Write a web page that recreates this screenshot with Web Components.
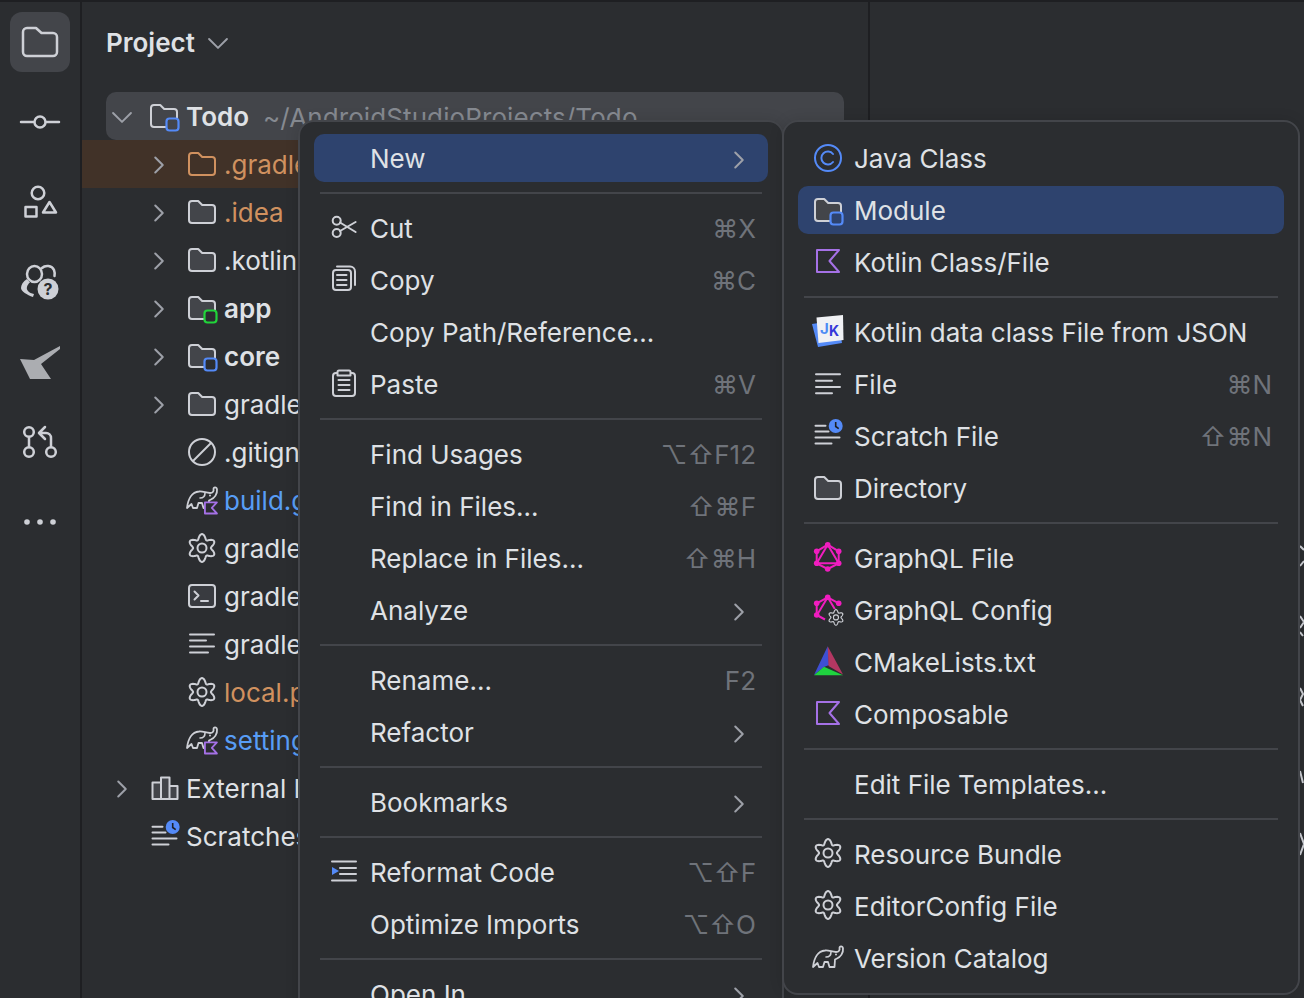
<!DOCTYPE html>
<html><head><meta charset="utf-8"><style>
html,body{margin:0;padding:0;background:#2b2d30;height:100%;overflow:hidden}
</style></head><body>
<x-app></x-app>
<script>
const S='#ced0d6',G='#9da0a8',B='#548af7',P='#a571e6',O='#d0915f';
const dim=`stroke="${S}" stroke-width="2" fill="none" stroke-linecap="round" stroke-linejoin="round"`;
const big=`stroke="${S}" stroke-width="2.5" fill="none" stroke-linecap="round" stroke-linejoin="round"`;
const folderPath='M3 8a3 3 0 0 1 3-3h6.2l4 4H26a3 3 0 0 1 3 3v12a3 3 0 0 1-3 3H6a3 3 0 0 1-3-3z';
let gp='';
for(let i=0;i<=120;i++){const t=i/120*Math.PI*2,r=11.4-2.5*Math.cos(6*t);gp+=(i?'L':'M')+(16+r*Math.cos(t)).toFixed(2)+' '+(15+r*Math.sin(t)).toFixed(2);}
const gear=`<path ${dim} d="${gp}z"/><circle cx="16" cy="15" r="4.5" ${dim}/>`;
const elephant=`<path stroke="${S}" stroke-width="1.8" fill="none" stroke-linecap="round" stroke-linejoin="round" d="M1 25C2 16 6 9 13 8.500C17 8 20 10 24 10C27 10 28 8 27.500 6C27.500 4 30.500 3.500 31 6.500C31.500 11 28.500 15 25 16.500L23 17.500L22.500 25H17.500L16 20H12.500L11 25H7L5.500 21L1 25z"/><path stroke="${S}" stroke-width="1.6" fill="none" stroke-linecap="round" d="M19 10c0 3-2 5-5 5"/><circle cx="24" cy="12.500" r="1" fill="${S}"/>`;
const kotlin=`<path d="M5 4h22l-9.500 11 9.500 11H5z" fill="none" stroke="${P}" stroke-width="2" stroke-linejoin="round"/>`;
const kotlinMini=`<path d="M2 2h26l-11 12 11 12H2z" style="fill:var(--badge,#2b2d30)" stroke="${P}" stroke-width="4" stroke-linejoin="round"/>`;
const modBadge=c=>`<rect x="18.500" y="18.500" width="12" height="12" rx="3" style="fill:var(--badge,#2b2d30)" stroke="${c}" stroke-width="2.2"/>`;
const scratchI=`<path ${dim} d="M3.500 5.700h10M3.500 11.500h13M3.500 17.500h24M3.500 23.500h16"/><circle cx="23.700" cy="6" r="7" fill="${B}"/><path d="M23.700 2v4.500l3 2.200" stroke="#1e1f22" stroke-width="1.600" fill="none"/>`;
const g1='#f01dbf';
const ICONS={
 folderBig:`<path ${big} d="M5 12a4 4 0 0 1 4-4h9l5.500 5H35a4 4 0 0 1 4 4v15a4 4 0 0 1-4 4H9a4 4 0 0 1-4-4z"/>`,
 commit:`<circle cx="22" cy="22" r="5.500" ${big}/><path ${big} d="M3 22h13M28 22h13"/>`,
 structure:`<circle cx="20" cy="13" r="6.300" ${big}/><rect x="7.500" y="27" width="11" height="9.500" ${big}/><path ${big} d="M31.500 22L38 32.500H25z"/>`,
 help:`<path ${big} d="M24 14a7.500 8 0 1 1-15 0 7.500 8 0 0 1 15 0z"/><path ${big} d="M24 8c3-3 10-3 12 2 .8 2 .8 4 .5 6"/><path fill="${S}" d="M9 19c-4 2.500-6 6-6 9 0 3 6 7 12 9l1-3c-5-1-8-4-7-7 .5-2 1.500-3.500 3-4.500z"/><circle cx="30" cy="29" r="10.500" fill="${S}"/><text x="30" y="35" font-family="Inter" font-weight="700" font-size="16" fill="#2b2d30" text-anchor="middle">?</text>`,
 android:`<path fill="#b9bbc0" d="M0 15L14 16L40 2V5L21 20L31 35H10Z" opacity=".9" style="filter:blur(.6px)"/>`,
 pr:`<circle cx="11" cy="12" r="4.800" ${big}/><circle cx="11" cy="32" r="4.800" ${big}/><circle cx="33" cy="32" r="4.800" ${big}/><path ${big} d="M11 17v10M33 27v-9a5 5 0 0 0-5-5h-6M27 7l-6 6 6 6"/>`,
 more:`<circle cx="9" cy="22" r="2.800" fill="${S}"/><circle cx="22" cy="22" r="2.800" fill="${S}"/><circle cx="35" cy="22" r="2.800" fill="${S}"/>`,
 down:`<path d="M5 11l11 11 11-11" fill="none" stroke="${G}" stroke-width="2.400" stroke-linecap="round" stroke-linejoin="round"/>`,
 right:`<path d="M11 6l10 10-10 10" fill="none" stroke="${G}" stroke-width="2.700" stroke-linecap="round" stroke-linejoin="round"/>`,
 folder:`<path d="${folderPath}" fill="#43454a" stroke="${S}" stroke-width="2" stroke-linejoin="round"/>`,
 folderO:`<path d="${folderPath}" fill="none" stroke="${O}" stroke-width="2" stroke-linejoin="round"/>`,
 moduleB:`<path d="${folderPath}" fill="none" stroke="${S}" stroke-width="2" stroke-linejoin="round"/>${modBadge(B)}`,
 moduleF:`<path d="${folderPath}" fill="#43454a" stroke="${S}" stroke-width="2" stroke-linejoin="round"/>${modBadge(B)}`,
 moduleG:`<path d="${folderPath}" fill="#43454a" stroke="${S}" stroke-width="2" stroke-linejoin="round"/>${modBadge('#21d33a')}`,
 ignore:`<circle cx="16" cy="16" r="13" ${dim}/><path ${dim} d="M7 25L25 7"/>`,
 gradleK:`<g transform="translate(0 -1)">${elephant}</g><g transform="translate(18 17.500) scale(.46)">${kotlinMini}</g>`,
 gear,
 term:`<rect x="3" y="5" width="26" height="22" rx="3" fill="#393b40" stroke="${S}" stroke-width="2"/><path ${dim} d="M8.500 11.500l4 4-4 4M15 21h7"/>`,
 lines:`<path ${dim} d="M4 6.500h24M4 12.500h16M4 18.500h24M4 24.500h18"/>`,
 lib:`<path d="M3.500 9h8.500v16.500H3.500zM12 4h8.500v21.500H12zM20.500 12.500h8v13h-8z" fill="#43454a" stroke="${S}" stroke-width="2" stroke-linejoin="round"/>`,
 scratch:scratchI,
 cut:`<circle cx="8.700" cy="8.700" r="4" ${dim}/><circle cx="8.700" cy="21" r="4" ${dim}/><path ${dim} d="M12 10.500L27.600 20M12 19L27.600 10"/>`,
 copy:`<rect x="5" y="6" width="18" height="20" rx="3" ${dim}/><path ${dim} d="M9 2.500h13a5 5 0 0 1 5 5V21M9 11h9.500M9 16h9.500M9 21h9.500"/>`,
 paste:`<rect x="5" y="5" width="22" height="23" rx="3" ${dim}/><path d="M11 2.500h10a1.500 1.500 0 0 1 1.500 1.500v3.500h-13V4A1.500 1.500 0 0 1 11 2.500z" fill="#2b2d30" stroke="${S}" stroke-width="2" stroke-linejoin="round"/><path ${dim} d="M10.500 12h11M10.500 17h11M10.500 22h11"/>`,
 reformat:`<path ${dim} d="M4 5.500h24M12 12h16M12 18h16M4 24.500h24"/><path d="M4 11l7 4-7 4z" fill="${B}"/>`,
 java:`<circle cx="16" cy="16" r="13" fill="none" stroke="${B}" stroke-width="2"/><path d="M21 12a6.500 6.500 0 1 0 0 8" fill="none" stroke="${B}" stroke-width="2" stroke-linecap="round"/>`,
 kotlin,
 jk:`<path d="M0 8L26 4L30 27L6 31z" fill="${B}"/><path d="M4.500 1.500L31 -1L31.500 24L6.500 27z" fill="#f0f1f4"/><text x="8" y="18" font-family="Inter" font-weight="700" font-size="15" fill="#4d8cf5">J</text><text x="17" y="20" font-family="Inter" font-weight="700" font-size="14" fill="#3538d9">K</text>`,
 file:`<path ${dim} d="M4 6.300h24M4 12.700h16M4 19h24M4 25.300h16"/>`,
 dir:`<path d="${folderPath}" fill="#43454a" stroke="${S}" stroke-width="2" stroke-linejoin="round"/>`,
 graph:`<g stroke="${g1}" stroke-width="2" fill="none" stroke-linejoin="round"><path d="M15.700 2.700L26.700 9.300V21.300L15.700 27L4.700 21.300V9.300Z"/><path d="M15.700 2.700L26.700 21.300H4.700Z"/></g><g fill="${g1}"><circle cx="15.700" cy="2.700" r="2.800"/><circle cx="26.700" cy="9.300" r="2.800"/><circle cx="26.700" cy="21.300" r="2.800"/><circle cx="15.700" cy="27" r="2.800"/><circle cx="4.700" cy="21.300" r="2.800"/><circle cx="4.700" cy="9.300" r="2.800"/></g>`,
 graphCfg:`<g stroke="${g1}" stroke-width="2" fill="none" stroke-linejoin="round"><path d="M4.700 9.300L15.700 3.300L26.700 9.300M4.700 9.300V21L13 25.500M15.700 3.300L5 21M15.700 3.300L24 17"/></g><g fill="${g1}"><circle cx="15.700" cy="3.300" r="2.800"/><circle cx="26.700" cy="9.300" r="2.800"/><circle cx="4.700" cy="21" r="2.800"/><circle cx="4.700" cy="9.300" r="2.800"/></g><circle cx="24" cy="23.300" r="8.500" fill="#2b2d30"/><g transform="translate(15 15) scale(.56)">${gear}</g>`,
 cmake:`<path d="M15.700 .3L2 29L12 21L17 19z" fill="#3e4fd3"/><path d="M15.700 .3L31 28.500L16.500 20z" fill="#b33762"/><path d="M2 29.300L12 20.700L31 29.300z" fill="#1fd33f"/>`,
 gradle:elephant
};
const BIG=new Set(['folderBig','commit','structure','help','pr','more']);
class XIcon extends HTMLElement{
  connectedCallback(){
    const n=this.getAttribute('name');let s=+this.getAttribute('size')||32,vb='0 0 32 32',w=s,h=s;
    if(BIG.has(n)){w=h=44;vb='0 0 44 44';}
    if(n==='android'){w=40;h=36;vb='0 0 40 36';}
    const dy=this.getAttribute('dy')||0;
    this.shadowRoot||this.attachShadow({mode:'open'});
    this.shadowRoot.innerHTML=`<style>:host{display:inline-flex;flex:none;width:${w}px;height:${h}px}svg{display:block;overflow:visible}</style><svg width="${w}" height="${h}" viewBox="${vb}"><g transform="translate(0 ${dy})">${ICONS[n]||''}</g></svg>`;
  }
}
customElements.define('x-icon',XIcon);

class XStripe extends HTMLElement{
  constructor(){super();const r=this.attachShadow({mode:'open'});
    const names=['folderBig','commit','structure','help','android','pr','more'];
    r.innerHTML=`<style>
    :host{display:flex;flex-direction:column;align-items:center;flex:none;box-sizing:border-box;padding-top:10px;gap:20px;border-right:2px solid #1e1f22;width:82px}
    div{width:60px;height:60px;border-radius:12px;display:flex;align-items:center;justify-content:center}
    div.a{background:#43454a}
    </style>`+names.map((n,i)=>`<div class="${i?'':'a'}"><x-icon name="${n}"></x-icon></div>`).join('');
  }
}
customElements.define('x-stripe',XStripe);

const ROW_DY={gear:1,scratch:1,lib:1.5};
class XRow extends HTMLElement{
  constructor(){super();this.attachShadow({mode:'open'});}
  connectedCallback(){
    const a=n=>this.getAttribute(n);
    const ar=a('arrow'),ic=a('icon');
    this.shadowRoot.innerHTML=`<style>
    :host{display:flex;align-items:center;height:48px;box-sizing:border-box;padding-left:${a('indent')||0}px;padding-right:570px;color:${a('color')||'#dfe1e5'};font-weight:${a('bold')!=null?600:400};white-space:nowrap;overflow:hidden}
    :host([hl]){background:#413228}
    :host([sel]){background:#43454a;border-radius:10px;margin:0 24px;padding:0;--badge:#43454a}
    .c{width:32px;flex:none;display:flex;justify-content:center;margin:2px 11px 0 0}
    :host([sel]) .c{margin-right:10px}
    .i{margin-right:6px}
    :host([top]) .i{margin-right:5px}
    .t{min-width:0;overflow:hidden;line-height:48px;margin-top:2px}
    :host([sel]) .t{overflow:visible;flex:none}
    .h{color:#868a91;font-weight:400;margin:2px 0 0 14px;letter-spacing:.1px;flex:none}
    </style><span class="c">${ar?`<x-icon name="${ar}" size="${ar==='down'?26:24}"></x-icon>`:''}</span><x-icon class="i" name="${ic}" dy="${ROW_DY[ic]||0}"></x-icon><span class="t"><slot></slot></span>${a('hint')?`<span class="h">${a('hint')}</span>`:''}`;
  }
}
customElements.define('x-row',XRow);

class XItem extends HTMLElement{
  constructor(){super();this.attachShadow({mode:'open'});}
  connectedCallback(){
    const a=n=>this.getAttribute(n);
    const ks=a('keys');
    this.shadowRoot.innerHTML=`<style>
    :host{display:block;height:52px;box-sizing:border-box;padding:2px 0;color:#dfe1e5;white-space:nowrap}
    :host([active]){--badge:#2e436e}
    .r{height:48px;display:flex;align-items:center;border-radius:10px;padding:0 12px 0 14px}
    :host([active]) .r{background:#2e436e}
    .ic{width:32px;height:32px;margin-right:10px;flex:none}
    .t{flex:1}
    .k{color:#6f737a}
    .ch{margin:3px 5px 0 0}
    </style><div class="r"><span class="ic">${a('icon')?`<x-icon name="${a('icon')}"></x-icon>`:''}</span><span class="t"><slot></slot></span>${ks?`<span class="k">${ks}</span>`:''}${a('sub')!=null?`<x-icon class="ch" name="right" size="24"></x-icon>`:''}</div>`;
  }
}
customElements.define('x-item',XItem);

class XSep extends HTMLElement{
  constructor(){super();this.attachShadow({mode:'open'}).innerHTML=`<style>:host{display:block;height:2px;margin:8px 6px;background:#43454a}</style>`;}
}
customElements.define('x-sep',XSep);

class XMenu extends HTMLElement{
  constructor(){super();this.attachShadow({mode:'open'}).innerHTML=`<style>
    :host{position:absolute;box-sizing:border-box;display:block;background:#2b2d30;border:2px solid #43454a;border-radius:16px;padding:10px 14px 8px 14px;overflow:hidden;font-size:26px;box-shadow:0 0 14px rgba(0,0,0,.12)}
    </style><slot></slot>`;}
}
customElements.define('x-menu',XMenu);

class XApp extends HTMLElement{
  constructor(){super();const r=this.attachShadow({mode:'open'});
  r.innerHTML=`<style>
   :host{display:flex;width:1304px;height:998px;box-sizing:border-box;border-top:2px solid #1e1f22;background:#2b2d30;font-family:Inter,"Liberation Sans",sans-serif;font-size:26px;color:#dfe1e5;position:relative;overflow:hidden}
   .panel{width:788px;flex:none;border-right:2px solid #1e1f22;box-sizing:border-box}
   .head{height:82px;display:flex;align-items:center;padding:0 0 1px 24px;font-weight:600;gap:10px;box-sizing:border-box}
   .tree{padding-top:8px}
   #m1{left:298px;top:118px;width:486px;height:900px}
   #m2{left:782px;top:118px;width:518px;height:875px}
   .peek{position:absolute;left:1300px;top:0;display:block}
   </style>
   <x-stripe></x-stripe>
   <div class="panel">
     <div class="head"><span>Project</span><x-icon name="down" size="26"></x-icon></div>
     <div class="tree">
      <x-row sel arrow="down" icon="moduleB" bold hint="~/AndroidStudioProjects/Todo">Todo</x-row>
      <x-row hl indent="61" arrow="right" icon="folderO" color="${O}">.gradle</x-row>
      <x-row indent="61" arrow="right" icon="folder" color="${O}">.idea</x-row>
      <x-row indent="61" arrow="right" icon="folder">.kotlin</x-row>
      <x-row indent="61" arrow="right" icon="moduleG" bold>app</x-row>
      <x-row indent="61" arrow="right" icon="moduleF" bold>core</x-row>
      <x-row indent="61" arrow="right" icon="folder">gradle</x-row>
      <x-row indent="61" icon="ignore">.gitign</x-row>
      <x-row indent="61" icon="gradleK" color="#589df6">build.g</x-row>
      <x-row indent="61" icon="gear">gradle</x-row>
      <x-row indent="61" icon="term">gradle</x-row>
      <x-row indent="61" icon="lines">gradle</x-row>
      <x-row indent="61" icon="gear" color="${O}">local.p</x-row>
      <x-row indent="61" icon="gradleK" color="#589df6">setting</x-row>
      <x-row top indent="24" arrow="right" icon="lib">External L</x-row>
      <x-row top indent="24" icon="scratch">Scratches</x-row>
     </div>
   </div>
   <svg class="peek" width="4" height="996" viewBox="0 2 4 996" fill="none" stroke="#ced0d6" stroke-width="2"><path d="M0 546l4 4M0 566l4-5M0 616l4 6-4 6M0 632l3 4M0 688l3 6-3 6 3 6M0 771l3 12M0 833l4 11-4 11"/></svg>
   <x-menu id="m1">
    <x-item active sub>New</x-item><x-sep></x-sep>
    <x-item icon="cut" keys="⌘X">Cut</x-item>
    <x-item icon="copy" keys="⌘C">Copy</x-item>
    <x-item>Copy Path/Reference...</x-item>
    <x-item icon="paste" keys="⌘V">Paste</x-item><x-sep></x-sep>
    <x-item keys="⌥⇧F12">Find Usages</x-item>
    <x-item keys="⇧⌘F">Find in Files...</x-item>
    <x-item keys="⇧⌘H">Replace in Files...</x-item>
    <x-item sub>Analyze</x-item><x-sep></x-sep>
    <x-item keys="F2">Rename...</x-item>
    <x-item sub>Refactor</x-item><x-sep></x-sep>
    <x-item sub>Bookmarks</x-item><x-sep></x-sep>
    <x-item icon="reformat" keys="⌥⇧F">Reformat Code</x-item>
    <x-item keys="⌥⇧O">Optimize Imports</x-item><x-sep></x-sep>
    <x-item sub>Open In</x-item>
   </x-menu>
   <x-menu id="m2">
    <x-item icon="java">Java Class</x-item>
    <x-item active icon="moduleF">Module</x-item>
    <x-item icon="kotlin">Kotlin Class/File</x-item><x-sep></x-sep>
    <x-item icon="jk">Kotlin data class File from JSON</x-item>
    <x-item icon="file" keys="⌘N">File</x-item>
    <x-item icon="scratch" keys="⇧⌘N">Scratch File</x-item>
    <x-item icon="dir">Directory</x-item><x-sep></x-sep>
    <x-item icon="graph">GraphQL File</x-item>
    <x-item icon="graphCfg">GraphQL Config</x-item>
    <x-item icon="cmake">CMakeLists.txt</x-item>
    <x-item icon="kotlin">Composable</x-item><x-sep></x-sep>
    <x-item>Edit File Templates...</x-item><x-sep></x-sep>
    <x-item icon="gear">Resource Bundle</x-item>
    <x-item icon="gear">EditorConfig File</x-item>
    <x-item icon="gradle">Version Catalog</x-item>
   </x-menu>`;
  }
}
customElements.define('x-app',XApp);
</script>
</body></html>
